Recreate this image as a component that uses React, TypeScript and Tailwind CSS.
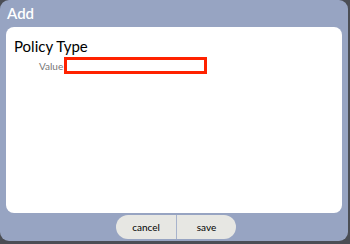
import React from "react";

export default function App() {
  return (
    <div className="w-[350px] h-[244px] bg-[#4b4e55] overflow-hidden" style={{ fontFamily: "Lato, 'Open Sans', sans-serif" }}>
      <div className="w-[348px] h-[241px] bg-[#97a4c2] rounded-[9px] flex flex-col">
        <div className="h-[27px] flex items-center px-[7px] text-white text-[15px] font-semibold leading-none">Add</div>
        <div className="mx-[6px] flex-1 bg-white rounded-[8px] pt-[10px] px-[8px]">
          <div className="text-[15px] text-black leading-[18px]">Policy Type</div>
          <div className="flex items-center mt-[2px] pl-[25px]">
            <span className="text-[10px] text-[#777] font-normal leading-none mr-[1px]">Value</span>
            <div className="w-[143px] h-[17px] border-[3px] border-[#ff2200] bg-white"></div>
          </div>
        </div>
        <div className="h-[28px] flex justify-center items-center pl-[4px]">
          <div className="flex h-[24px] rounded-full bg-[#e7e7e3] overflow-hidden text-[10px] text-black">
            <button className="w-[61px] h-full flex items-center justify-center border-r border-[#a7b3cc]">cancel</button>
            <button className="w-[59px] h-full flex items-center justify-center">save</button>
          </div>
        </div>
      </div>
    </div>
  );
}
